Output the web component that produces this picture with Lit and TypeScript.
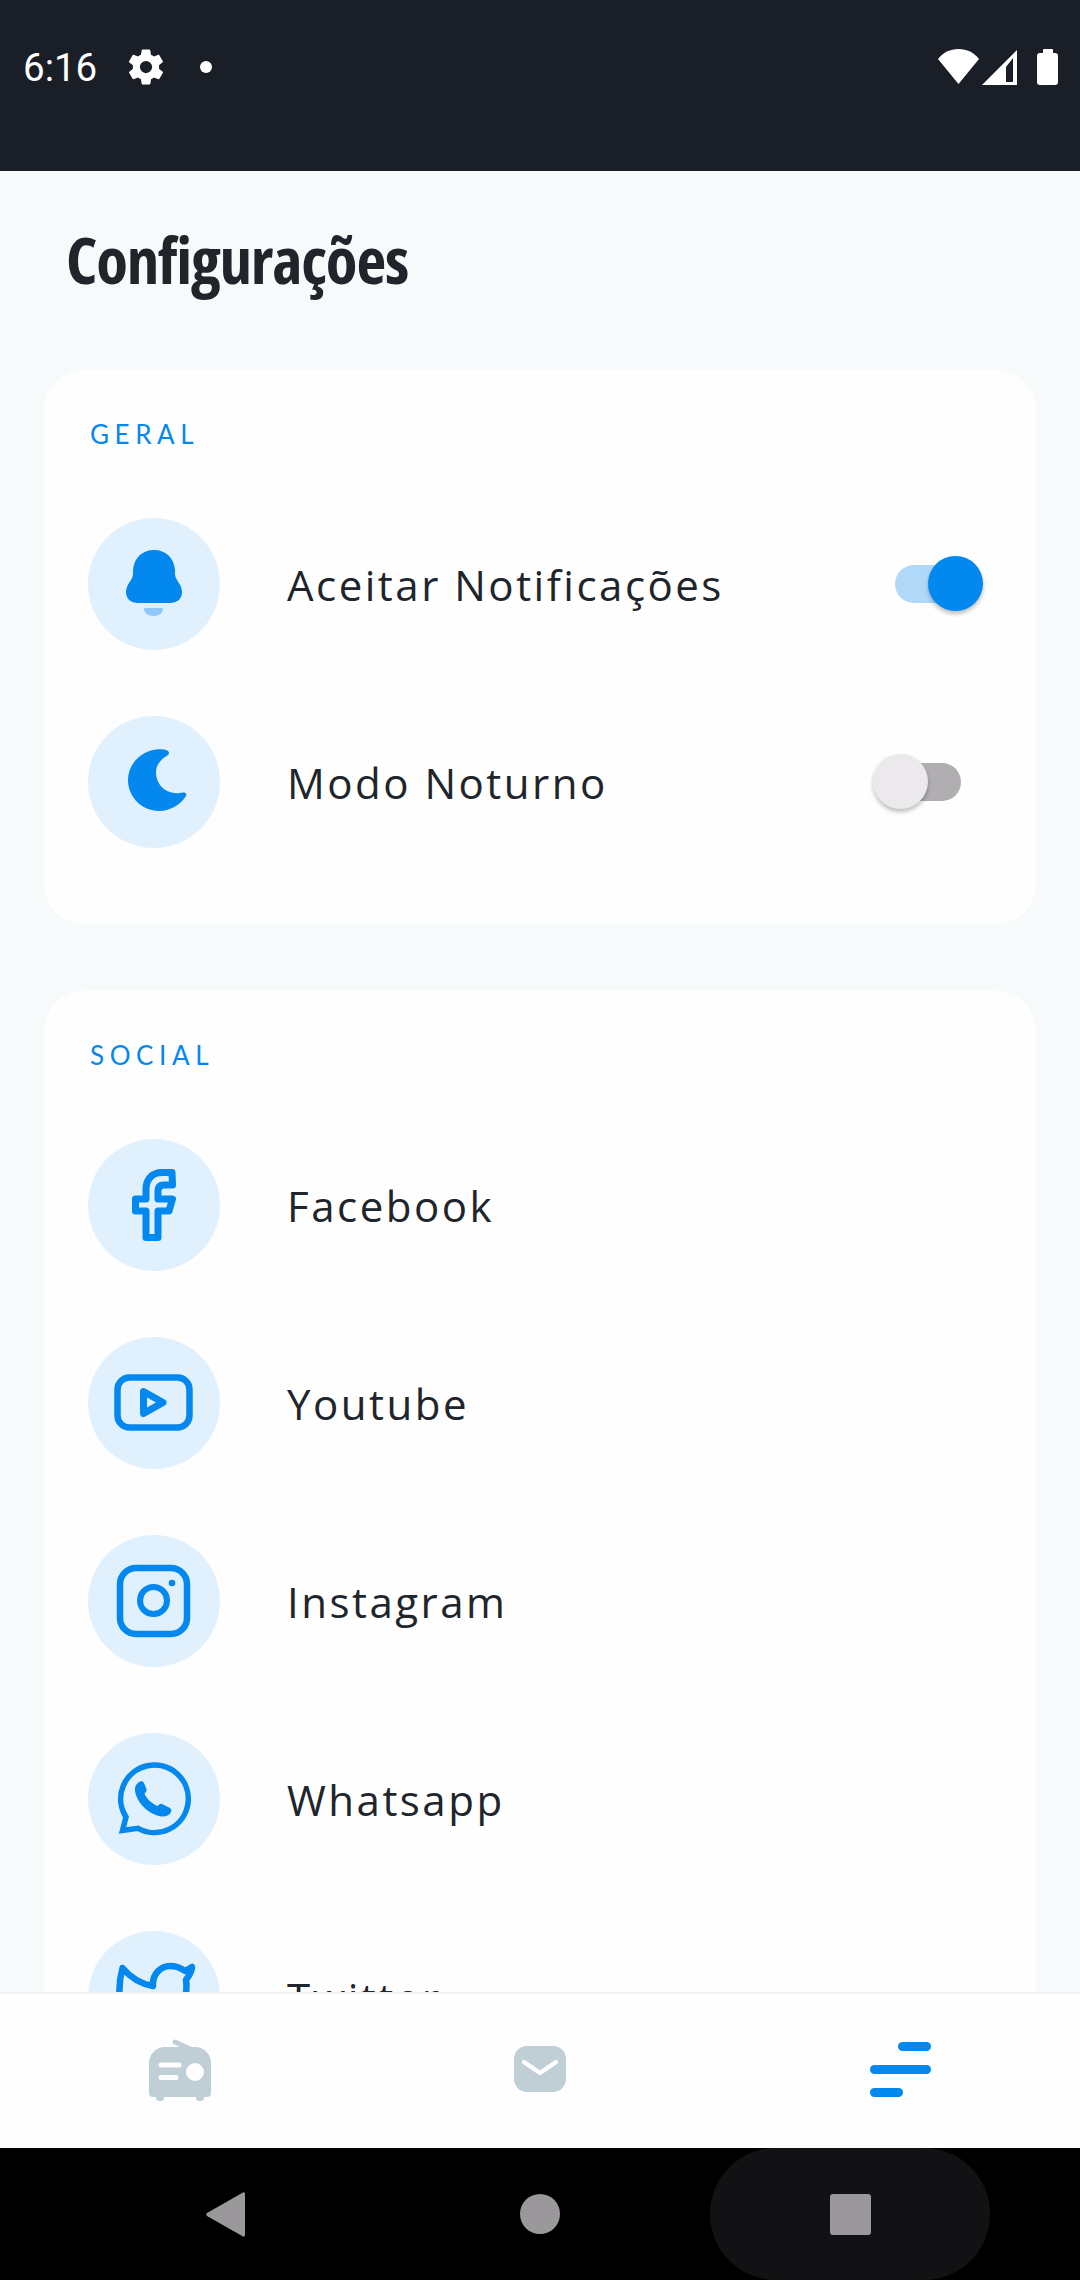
import { LitElement, css, html, svg } from 'lit';
import { customElement, state } from 'lit/decorators.js';
import { classMap } from 'lit/directives/class-map.js';

// icons are drawn in the 132px space of the round badge
const ICONS = {
  bell: svg`
    <path fill="#0288ee" d="M66 32C54 32 46 40 45 52V56C45 62 38 66 38 74C38 81 43 85 50 85H82C89 85 94 81 94 74C94 66 87 62 87 56V52C86 40 78 32 66 32Z"/>
    <path fill="#8fc7f6" d="M56 91Q56 90 58 90H73Q75 90 75 91C75 95 71 98 65.5 98C60 98 56 95 56 91Z"/>`,
  moon: svg`
    <path fill="#0288ee" d="M76 33.5C58 31 40 45 40 64C40 81 54 95 71 95C83 95 93 88 98 80C99 77 97 76 95 76.5C80 80 68 70 68 56C68 49 73 43 80 39C82 37 81 34 76 33.5Z"/>`,
  facebook: svg`
    <path class="line" stroke-width="7" d="M84 33.5H74C64.5 33.5 58 40 58 50V60H47.5V72H58V98.5H70V72H81L84.5 60H70V52C70 48 72 46 76 46H84.5Z"/>`,
  youtube: svg`
    <rect class="line" stroke-width="6.5" x="29.5" y="40.5" width="72" height="50" rx="12"/>
    <path class="line" stroke-width="7" d="M55.5 54.5L75 65.5L55.5 76.5Z"/>`,
  instagram: svg`
    <rect class="line" stroke-width="6.5" x="32" y="33" width="67" height="66" rx="16"/>
    <circle class="line" stroke-width="6" cx="65.5" cy="65.5" r="13.5"/>
    <circle fill="#0288ee" cx="84" cy="48" r="3.3"/>`,
  whatsapp: svg`
    <path class="line sharp" stroke-width="5.5" d="M34.500 97.500L38 84A33.800 33.800 0 1 1 50 95.300Z"/>
    <path fill="#0288ee" d="M51 49C53 48 55 48 56 50L58.5 56C59 57.5 58 59 56.5 60.5C58 65 64 71 69.5 73C71 71.5 72.5 70 74 71L81 74.5C83 75.5 84 77 83 79C81 83 77 84 73.5 83.5C60 81 49 70 47 58C46.5 54 48 51 51 49Z"/>`,
  twitter: svg`
    <path class="line" stroke-width="6.5" d="M33 75C30 60 32 46 34.5 37C42 46 53 53 65 55C64 42 74 35 82 35C88 35 93 37 97 40L104 36C104 41 100 46 98 49C99 55 98 65 96 75"/>`,
};

type IconName = keyof typeof ICONS;

interface Row {
  icon: IconName;
  label: string;
  toggle?: 'notify' | 'night';
}

const GENERAL: Row[] = [
  { icon: 'bell', label: 'Aceitar Notificações', toggle: 'notify' },
  { icon: 'moon', label: 'Modo Noturno', toggle: 'night' },
];

const SOCIAL: Row[] = [
  { icon: 'facebook', label: 'Facebook' },
  { icon: 'youtube', label: 'Youtube' },
  { icon: 'instagram', label: 'Instagram' },
  { icon: 'whatsapp', label: 'Whatsapp' },
  { icon: 'twitter', label: 'Twitter' },
];

@customElement('app-root')
export class AppRoot extends LitElement {
  @state() private notify = true;
  @state() private night = false;

  static styles = css`
    :host {
      display: flex;
      flex-direction: column;
      width: 1080px;
      height: 2280px;
      overflow: hidden;
      background: #f6fafb;
      font-family: 'Open Sans', sans-serif;
      color: #20252c;
    }

    /* status bar */
    .status {
      flex: none;
      height: 171px;
      box-sizing: border-box;
      padding: 49px 22px 0 23px;
      background: #191e27;
      color: #fff;
      display: flex;
      align-items: flex-start;
    }
    .time {
      font: 400 38.5px/38px Roboto, sans-serif;
      width: 102px;
    }
    .gear {
      width: 42px;
      height: 42px;
      margin-top: -3px;
    }
    .dot {
      width: 12px;
      height: 12px;
      border-radius: 50%;
      background: #fff;
      margin: 12px 0 0 33px;
    }
    .status-right {
      margin-left: auto;
      display: flex;
      align-items: flex-start;
    }
    .wifi {
      width: 41px;
      height: 35px;
    }
    .signal {
      width: 35px;
      height: 35px;
      margin: 1px 0 0 3px;
    }
    .battery {
      width: 21px;
      height: 36px;
      margin-left: 20px;
    }

    /* scrolling content */
    .main {
      flex: 1;
      min-height: 0;
      overflow: hidden;
      padding: 0 44px;
    }
    .title {
      margin: 0;
      padding: 46px 0 0 22px;
      height: 199px;
      box-sizing: border-box;
      font: 700 65px/84px 'Open Sans', sans-serif;
      font-stretch: 75%;
      letter-spacing: -1.2px;
      color: #20252c;
    }
    .card {
      background: #fefefe;
      border-radius: 40px;
      padding: 49px 0 76px 44px;
      margin-bottom: 67px;
    }
    .card-label {
      height: 33px;
      padding-left: 2px;
      margin-bottom: 66px;
      font: 400 26px/30px Lato, sans-serif;
      letter-spacing: 5.6px;
      color: #0288ee;
    }
    .rows {
      display: flex;
      flex-direction: column;
      gap: 66px;
    }
    .row {
      display: flex;
      align-items: center;
    }
    .badge {
      flex: none;
      width: 132px;
      height: 132px;
      border-radius: 50%;
      background: #e1f0fd;
      margin-right: 67px;
    }
    .badge svg {
      display: block;
      width: 132px;
      height: 132px;
    }
    .line {
      fill: none;
      stroke: #0288ee;
      stroke-linejoin: round;
      stroke-linecap: round;
    }
    .line.sharp {
      stroke-linejoin: miter;
    }
    .row-label {
      font-size: 42px;
      line-height: 52px;
      letter-spacing: 2.5px;
      padding-top: 1px;
    }

    /* switches */
    .switch {
      position: relative;
      width: 74px;
      height: 38px;
      margin-left: auto;
      margin-right: 75px;
      border: 0;
      padding: 0;
      border-radius: 19px;
      background: #b0aeb1;
    }
    .switch.on {
      margin-right: 67px;
      background: #b0d9f9;
    }
    .thumb {
      position: absolute;
      top: -9px;
      left: -14px;
      width: 55px;
      height: 55px;
      border-radius: 50%;
      background: #ebe9ec;
      box-shadow: 0 3px 4px rgba(0, 0, 0, 0.25);
    }
    .switch.on .thumb {
      left: 33px;
      background: #0288ee;
    }

    /* bottom tabs */
    .tabs {
      flex: none;
      height: 156px;
      box-sizing: border-box;
      display: flex;
      background: #fefefe;
      border-top: 2px solid #f4f2f5;
    }
    .tab {
      flex: 1;
      display: flex;
      align-items: center;
      justify-content: center;
    }
    .tab-radio {
      width: 63px;
      height: 62px;
      margin-bottom: 2px;
    }
    .tab-mail {
      width: 52px;
      height: 46px;
      margin-bottom: 4px;
    }
    .tab-menu {
      width: 61px;
      height: 55px;
      margin-bottom: 4px;
    }

    /* android nav bar */
    .sysnav {
      flex: none;
      position: relative;
      height: 132px;
      background: #000;
      display: flex;
    }
    .sysnav-cell {
      flex: 1;
      display: flex;
      align-items: center;
      justify-content: center;
    }
    .recents-pill {
      position: absolute;
      left: 710px;
      top: 0;
      width: 280px;
      height: 132px;
      border-radius: 66px;
      background: #121214;
    }
    .back {
      width: 39px;
      height: 45px;
      position: relative;
      left: 45px;
    }
    .home {
      width: 40px;
      height: 40px;
      border-radius: 50%;
      background: #9a989b;
    }
    .recents {
      position: relative;
      left: -50px;
      width: 41px;
      height: 41px;
      border-radius: 3px;
      background: #9a989b;
    }
  `;

  private renderRow(row: Row) {
    const isOn = row.toggle === 'notify' ? this.notify : this.night;
    return html`
      <div class="row">
        <div class="badge">
          <svg viewBox="0 0 132 132">${ICONS[row.icon]}</svg>
        </div>
        <div class="row-label">${row.label}</div>
        ${row.toggle
          ? html`<div
              class=${classMap({ switch: true, on: isOn })}
              @click=${() => this.flip(row.toggle!)}
            >
              <div class="thumb"></div>
            </div>`
          : ''}
      </div>
    `;
  }

  private flip(key: 'notify' | 'night') {
    if (key === 'notify') {
      this.notify = !this.notify;
    } else {
      this.night = !this.night;
    }
  }

  render() {
    return html`
      <div class="status">
        <div class="time">6:16</div>
        <svg class="gear" viewBox="0 0 24 24" fill="#fff">
          <path d="M19.4 13c.04-.32.1-.66.1-1s-.06-.68-.1-1l2.1-1.65c.2-.15.25-.42.12-.64l-2-3.46c-.12-.22-.39-.3-.61-.22l-2.49 1c-.52-.4-1.08-.73-1.69-.98l-.38-2.65A.49.49 0 0 0 14 2h-4c-.25 0-.46.18-.49.42l-.38 2.65c-.61.25-1.17.59-1.69.98l-2.49-1a.5.5 0 0 0-.61.22l-2 3.46c-.13.22-.07.49.12.64L4.56 11c-.04.32-.06.66-.06 1s.02.68.06 1l-2.1 1.65a.5.5 0 0 0-.12.64l2 3.46c.12.22.39.3.61.22l2.49-1c.52.4 1.08.73 1.69.98l.38 2.65c.03.24.24.42.49.42h4c.25 0 .46-.18.49-.42l.38-2.65c.61-.25 1.17-.59 1.69-.98l2.49 1c.22.08.49 0 .61-.22l2-3.46c.13-.22.07-.49-.12-.64L19.4 13zM12 15.5a3.5 3.5 0 1 1 0-7 3.5 3.5 0 0 1 0 7z"/>
        </svg>
        <div class="dot"></div>
        <div class="status-right">
          <svg class="wifi" viewBox="0 0 41 35" fill="#fff">
            <path d="M20.5 0C12 0 5 3.500 0 10L20.5 35L41 10C36 3.500 29 0 20.5 0Z"/>
          </svg>
          <svg class="signal" viewBox="0 0 35 35" fill="#fff">
            <path fill-rule="evenodd" d="M35 0V35H0ZM31 8L24 17V32H31Z"/>
          </svg>
          <svg class="battery" viewBox="0 0 21 36" fill="#fff">
            <path d="M6 1C6 0.500 6.500 0 7 0H15C15.500 0 16 0.500 16 1V4H18C20 4 21 5 21 7V33C21 35 20 36 18 36H3C1 36 0 35 0 33V7C0 5 1 4 3 4H6Z"/>
          </svg>
        </div>
      </div>

      <div class="main">
        <h1 class="title">Configurações</h1>
        <section class="card">
          <div class="card-label">GERAL</div>
          <div class="rows">${GENERAL.map((r) => this.renderRow(r))}</div>
        </section>
        <section class="card">
          <div class="card-label">SOCIAL</div>
          <div class="rows">${SOCIAL.map((r) => this.renderRow(r))}</div>
        </section>
      </div>

      <nav class="tabs">
        <div class="tab">
          <svg class="tab-radio" viewBox="0 0 63 62" fill="#c0ced6">
            <path d="M16 8H46C55 8 62 15 62 24V54C62 57 60 58 58 58H4C2 58 0 57 0 54V24C0 15 7 8 16 8Z"/>
            <path d="M7 57H15V59A3 3 0 0 1 12 62H10A3 3 0 0 1 7 59ZM47 57H55V59A3 3 0 0 1 52 62H50A3 3 0 0 1 47 59Z"/>
            <path d="M26 3L50 14" stroke="#c0ced6" stroke-width="5" stroke-linecap="round"/>
            <path d="M12 26H30M12 38.500H27" stroke="#fefefe" stroke-width="5" stroke-linecap="round"/>
            <circle cx="46" cy="33" r="9" fill="#fefefe"/>
          </svg>
        </div>
        <div class="tab">
          <svg class="tab-mail" viewBox="0 0 52 46">
            <rect width="52" height="46" rx="13" fill="#c0ced6"/>
            <path d="M10 16L26 27L42 16" fill="none" stroke="#fefefe" stroke-width="4.500" stroke-linecap="round" stroke-linejoin="round"/>
          </svg>
        </div>
        <div class="tab">
          <svg class="tab-menu" viewBox="0 0 61 55" fill="#0288ee">
            <rect x="28" y="0" width="33" height="9" rx="4.500"/>
            <rect x="0" y="23" width="61" height="9" rx="4.500"/>
            <rect x="0" y="46" width="33" height="9" rx="4.500"/>
          </svg>
        </div>
      </nav>

      <div class="sysnav">
        <div class="recents-pill"></div>
        <div class="sysnav-cell">
          <svg class="back" viewBox="0 0 39 45" fill="#9a989b">
            <path d="M37 0.500C38 0 39 1 39 2V43C39 44 38 45 37 44.500L1 24C0 23 0 22 1 21Z"/>
          </svg>
        </div>
        <div class="sysnav-cell"><div class="home"></div></div>
        <div class="sysnav-cell"><div class="recents"></div></div>
      </div>
    `;
  }
}

declare global {
  interface HTMLElementTagNameMap {
    'app-root': AppRoot;
  }
}
